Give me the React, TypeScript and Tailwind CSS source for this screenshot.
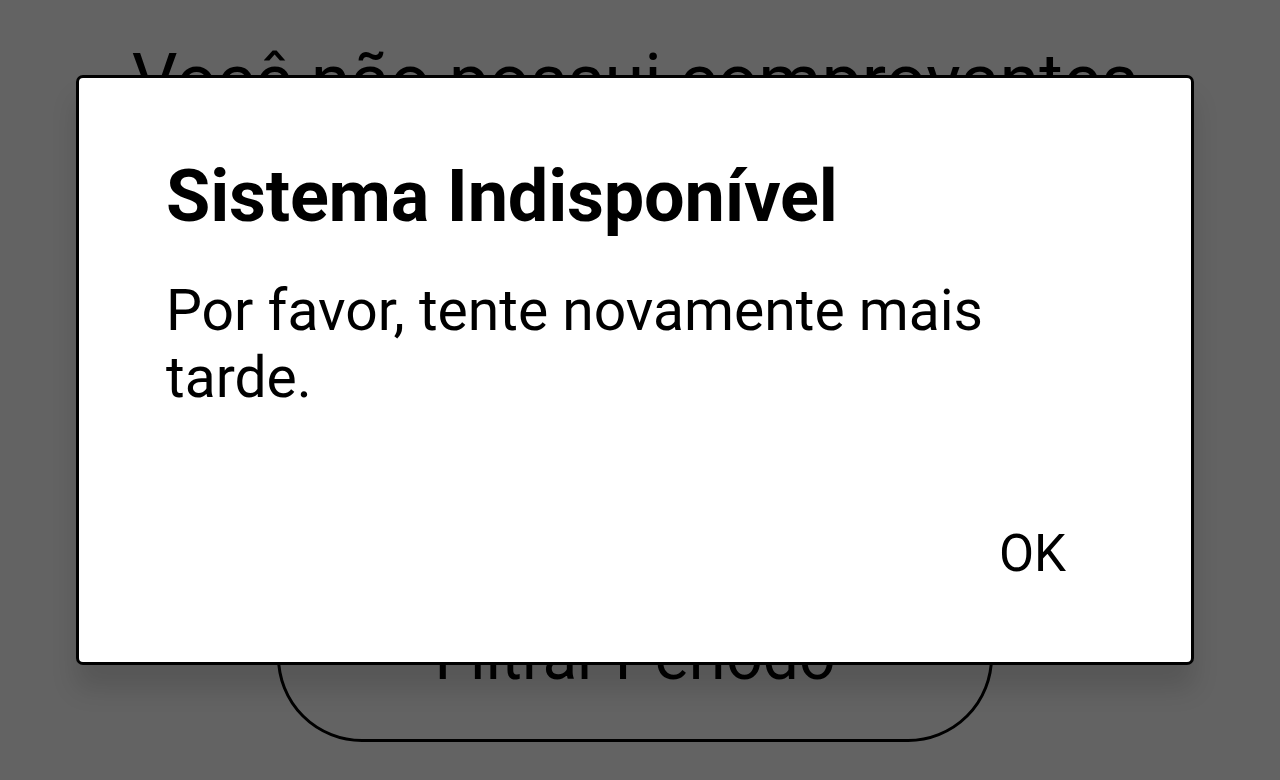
export default function App() {
  return (
    <div className="relative h-[780px] w-[1280px] overflow-hidden bg-white font-['Roboto',sans-serif] text-black">
      {/* page behind the dialog */}
      <div className="flex flex-col items-center pt-[45px] pr-[10px]">
        <p className="text-[72px] leading-none whitespace-nowrap">Você não possui comprovantes</p>
        <div className="mt-[455px] flex h-[170px] w-[716px] items-end justify-center rounded-[85px] border-[3px] border-black pb-[49px]">
          <span className="text-[64px] leading-none">Filtrar Período</span>
        </div>
      </div>

      {/* backdrop + dialog */}
      <div className="absolute inset-0 bg-[rgba(0,0,0,0.61)]">
        <div className="ml-[76px] mt-[75px] flex h-[590px] w-[1118px] flex-col rounded-[7px] border-[3px] border-black bg-white px-[87px] pt-[83px] shadow-[0_24px_26px_rgba(0,0,0,0.13)]">
          <h1 className="text-[72px] font-bold leading-none tracking-[-0.2px]">Sistema Indisponível</h1>
          <p className="mt-[44px] text-[57px] leading-[67px]">Por favor, tente novamente mais tarde.</p>
          <div className="mt-auto mb-[83px] flex justify-end pr-[38px]">
            <button className="text-[51px] leading-none">OK</button>
          </div>
        </div>
      </div>
    </div>
  );
}
